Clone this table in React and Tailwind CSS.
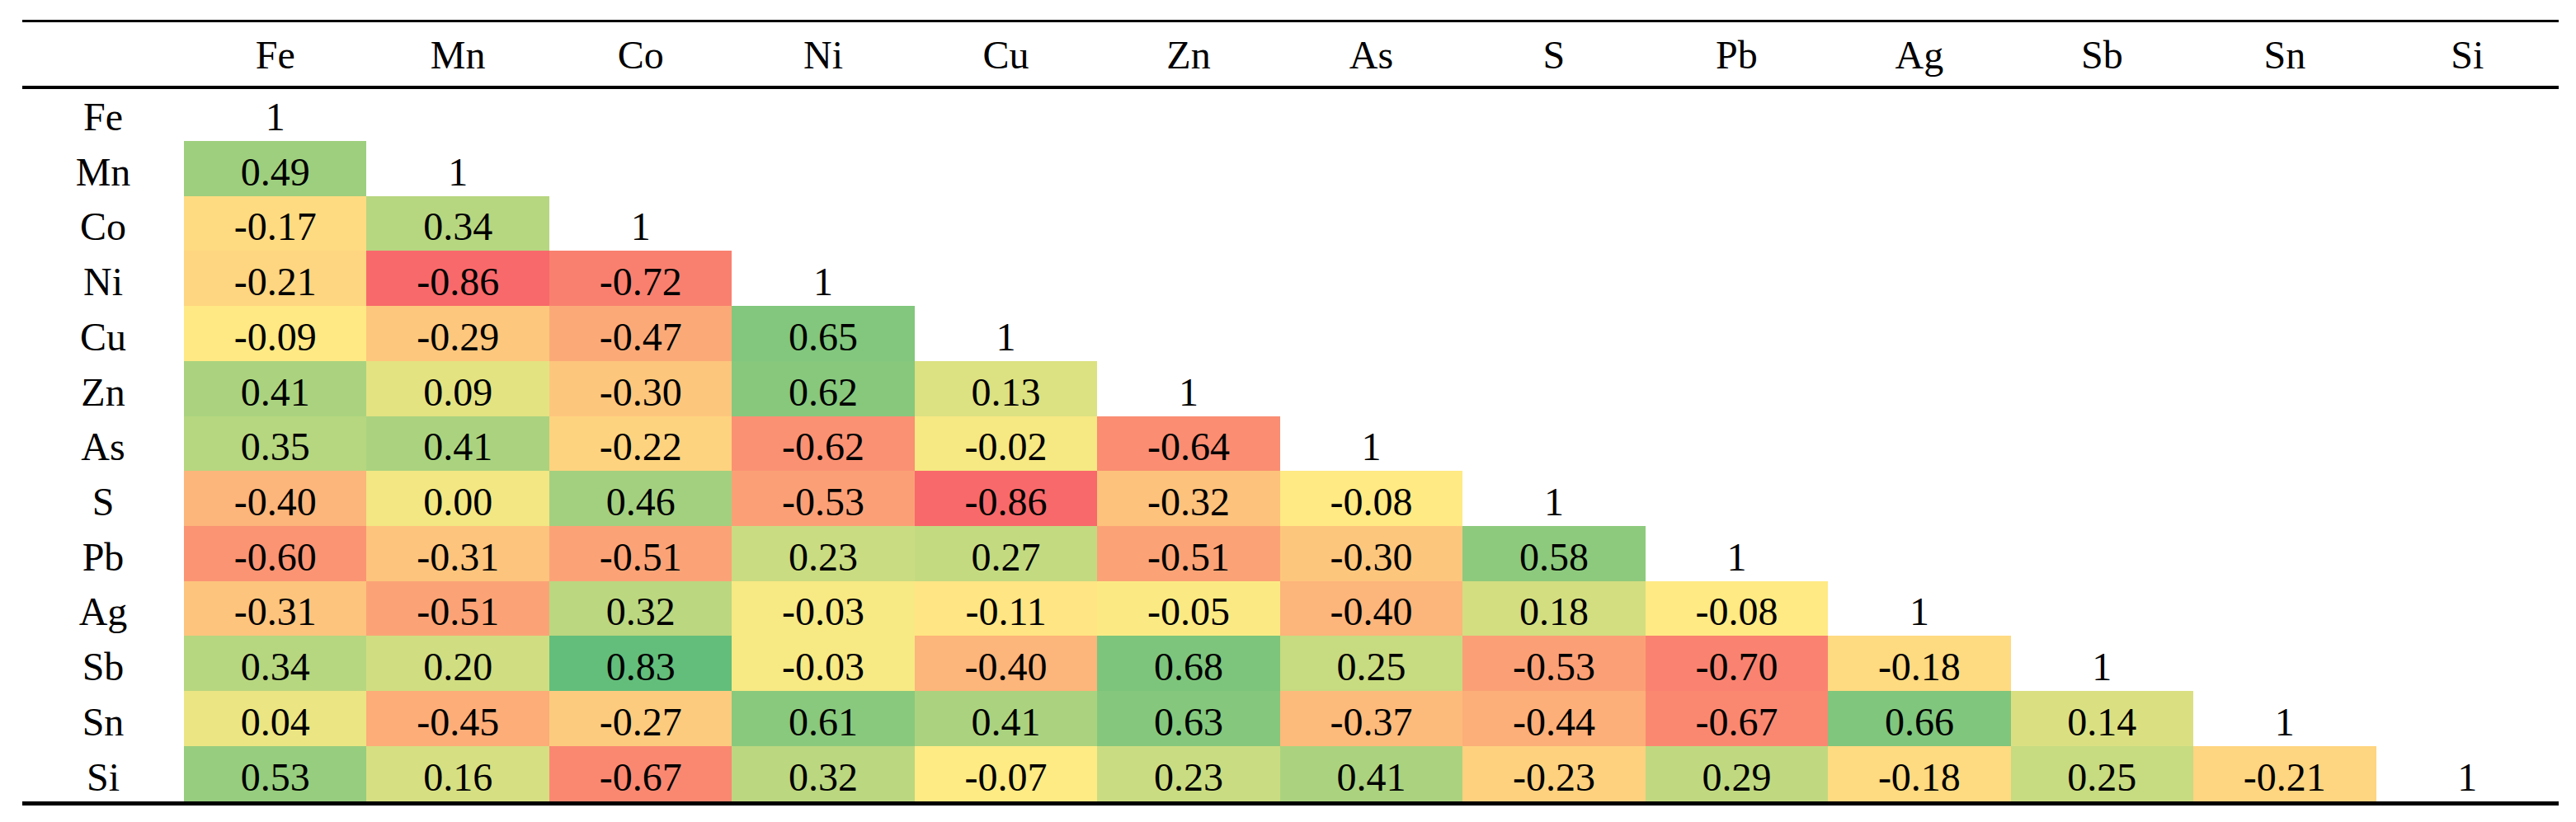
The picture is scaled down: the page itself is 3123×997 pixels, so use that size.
import React from "react";

const labels = ["Fe", "Mn", "Co", "Ni", "Cu", "Zn", "As", "S", "Pb", "Ag", "Sb", "Sn", "Si"];

const data = [
  [],
  ["0.49"],
  ["-0.17", "0.34"],
  ["-0.21", "-0.86", "-0.72"],
  ["-0.09", "-0.29", "-0.47", "0.65"],
  ["0.41", "0.09", "-0.30", "0.62", "0.13"],
  ["0.35", "0.41", "-0.22", "-0.62", "-0.02", "-0.64"],
  ["-0.40", "0.00", "0.46", "-0.53", "-0.86", "-0.32", "-0.08"],
  ["-0.60", "-0.31", "-0.51", "0.23", "0.27", "-0.51", "-0.30", "0.58"],
  ["-0.31", "-0.51", "0.32", "-0.03", "-0.11", "-0.05", "-0.40", "0.18", "-0.08"],
  ["0.34", "0.20", "0.83", "-0.03", "-0.40", "0.68", "0.25", "-0.53", "-0.70", "-0.18"],
  ["0.04", "-0.45", "-0.27", "0.61", "0.41", "0.63", "-0.37", "-0.44", "-0.67", "0.66", "0.14"],
  ["0.53", "0.16", "-0.67", "0.32", "-0.07", "0.23", "0.41", "-0.23", "0.29", "-0.18", "0.25", "-0.21"],
];

const all = data.flat().map(Number).sort((a, b) => a - b);
const MIN = all[0];
const MAX = all[all.length - 1];
const MID =
  all.length % 2 === 0
    ? (all[all.length / 2 - 1] + all[all.length / 2]) / 2
    : all[(all.length - 1) / 2];

const RED = [248, 105, 107];
const YEL = [255, 235, 132];
const GRN = [99, 190, 123];

function mix(a, b, t) {
  return a.map((x, i) => Math.round(x + (b[i] - x) * t));
}

function heat(s) {
  const v = Number(s);
  let c;
  if (v <= MID) c = mix(RED, YEL, (v - MIN) / (MID - MIN));
  else c = mix(YEL, GRN, (v - MID) / (MAX - MID));
  return `rgb(${c[0]}, ${c[1]}, ${c[2]})`;
}

function Row({ i }) {
  const h = i === 0 ? "h-[63px]" : "h-[66.72px]";
  return (
    <div className={`grid grid-cols-[196px_repeat(13,minmax(0,1fr))] ${h}`}>
      <div className="flex items-end justify-center pb-[5px]">{labels[i]}</div>
      {labels.map((_, j) => {
        if (j < i) {
          const v = data[i][j];
          return (
            <div
              key={j}
              className="flex items-end justify-center pb-[5px]"
              style={{ backgroundColor: heat(v) }}
            >
              {v}
            </div>
          );
        }
        if (j === i) {
          return (
            <div key={j} className="flex items-end justify-center pb-[5px]">
              1
            </div>
          );
        }
        return <div key={j} />;
      })}
    </div>
  );
}

export default function App() {
  return (
    <div className="w-[3123px] h-[997px] bg-white pl-[27px] pt-[24px] font-['Liberation_Serif',serif] text-[48px] leading-none text-black">
      <div className="w-[3075px] border-t-[3px] border-b-[5px] border-black">
        <div className="grid grid-cols-[196px_repeat(13,minmax(0,1fr))] h-[81px] border-b-[4px] border-black">
          <div />
          {labels.map((l) => (
            <div key={l} className="flex items-end justify-center pb-[13px]">
              {l}
            </div>
          ))}
        </div>
        {labels.map((_, i) => (
          <Row key={i} i={i} />
        ))}
      </div>
    </div>
  );
}
